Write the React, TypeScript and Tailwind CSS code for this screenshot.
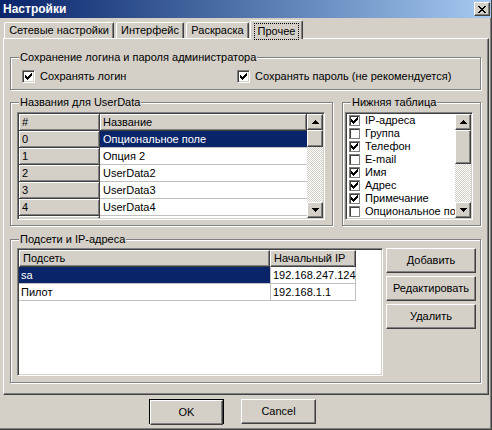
import React from "react";

// classic Win2000 3D edges
const raised =
  "border border-t-white border-l-white border-r-[#404040] border-b-[#404040] shadow-[inset_-1px_-1px_0_#808080]";
const sunken =
  "border border-t-[#808080] border-l-[#808080] border-r-white border-b-white p-px shadow-[inset_1px_1px_0_#404040,inset_-1px_-1px_0_#d4d0c8]";
const dither =
  "bg-[image:repeating-conic-gradient(#fff_0%_25%,#d4d0c8_0%_50%)] bg-[length:2px_2px]";

function Px({ rows }: { rows: [number, number, number][] }) {
  return (
    <>
      {rows.map(([x, y, w], i) => (
        <rect key={i} x={x} y={y} width={w} height={1} />
      ))}
    </>
  );
}

function Tick() {
  return (
    <svg width="7" height="7" viewBox="0 0 7 7" shapeRendering="crispEdges" className="fill-black">
      <Px
        rows={[
          [6, 0, 1],
          [5, 1, 2],
          [0, 2, 1],
          [4, 2, 3],
          [0, 3, 2],
          [3, 3, 3],
          [0, 4, 5],
          [1, 5, 3],
          [2, 6, 1],
        ]}
      />
    </svg>
  );
}

function Arrow({ down }: { down?: boolean }) {
  const rows: [number, number, number][] = [
    [3, 0, 1],
    [2, 1, 3],
    [1, 2, 5],
    [0, 3, 7],
  ];
  return (
    <svg
      width="7"
      height="4"
      viewBox="0 0 7 4"
      shapeRendering="crispEdges"
      className={`fill-black ${down ? "rotate-180" : ""}`}
    >
      <Px rows={rows} />
    </svg>
  );
}

function CloseGlyph() {
  return (
    <svg width="8" height="7" viewBox="0 0 8 7" shapeRendering="crispEdges" className="fill-black">
      <Px
        rows={[
          [0, 0, 2],
          [6, 0, 2],
          [1, 1, 2],
          [5, 1, 2],
          [2, 2, 4],
          [3, 3, 2],
          [2, 4, 4],
          [1, 5, 2],
          [5, 5, 2],
          [0, 6, 2],
          [6, 6, 2],
        ]}
      />
    </svg>
  );
}

function Check({ checked }: { checked?: boolean }) {
  return (
    <div className={`flex h-[13px] w-[13px] shrink-0 items-center justify-center bg-white ${sunken}`}>
      {checked && <Tick />}
    </div>
  );
}

function SmallCheck({ checked }: { checked?: boolean }) {
  return (
    <div className="flex h-[11px] w-[11px] shrink-0 items-center justify-center border border-[#808080] bg-white shadow-[inset_1px_1px_0_#404040]">
      {checked && <Tick />}
    </div>
  );
}

function VScroll({ thumb }: { thumb: string }) {
  return (
    <div className="flex w-[16px] shrink-0 flex-col">
      <div className={`flex h-[16px] shrink-0 items-center justify-center bg-[#d4d0c8] ${raised}`}>
        <Arrow />
      </div>
      <div className={`shrink-0 bg-[#d4d0c8] ${raised} ${thumb}`} />
      <div className={`flex-1 ${dither}`} />
      <div className={`flex h-[16px] shrink-0 items-center justify-center bg-[#d4d0c8] ${raised}`}>
        <Arrow down />
      </div>
    </div>
  );
}

function Group({
  label,
  className,
  children,
}: {
  label: string;
  className: string;
  children: React.ReactNode;
}) {
  return (
    <div
      className={`relative shrink-0 border border-[#808080] shadow-[inset_1px_1px_0_#fff,1px_1px_0_#fff] ${className}`}
    >
      <span className="absolute -top-[7px] left-[8px] bg-[#d4d0c8] px-px leading-[13px] whitespace-nowrap">
        {label}
      </span>
      {children}
    </div>
  );
}

function Btn({ children, className = "" }: { children: React.ReactNode; className?: string }) {
  return (
    <div className={`flex h-[25px] items-center justify-center bg-[#d4d0c8] ${raised} ${className}`}>
      {children}
    </div>
  );
}

function Tab({ children, className }: { children: React.ReactNode; className: string }) {
  return (
    <div
      className={`flex h-[16px] items-center justify-center rounded-t-[2px] border border-b-0 border-t-white border-l-white border-r-[#404040] shadow-[inset_-1px_0_0_#808080] whitespace-nowrap ${className}`}
    >
      {children}
    </div>
  );
}

const fixedCell =
  "border-r border-b border-[#404040] bg-[#d4d0c8] pl-[3px] leading-[16px] shadow-[inset_1px_1px_0_#fff,inset_-1px_-1px_0_#808080]";

const userData = ["Опциональное поле", "Опция 2", "UserData2", "UserData3", "UserData4", ""];

const columns: [string, boolean][] = [
  ["IP-адреса", true],
  ["Группа", false],
  ["Телефон", true],
  ["E-mail", false],
  ["Имя", true],
  ["Адрес", true],
  ["Примечание", true],
  ["Опциональное поле", false],
];

const subnets = [
  { name: "sa", ip: "192.168.247.124", selected: true },
  { name: "Пилот", ip: "192.168.1.1", selected: false },
];

export default function App() {
  return (
    <div className="flex h-[430px] w-[492px] flex-col overflow-hidden border-r border-b border-[#404040] bg-[#d4d0c8] font-['Liberation_Sans',Arial,sans-serif] text-[11px] leading-[13px] text-black shadow-[inset_-1px_-1px_0_#808080]">
      {/* title bar */}
      <div className="flex h-[18px] shrink-0 items-center justify-between bg-linear-to-r from-[#0a246a] to-[#a6caf0] pr-[1px] pl-[3px]">
        <span className="text-[12px] font-bold text-white">Настройки</span>
        <div className={`flex h-[14px] w-[16px] items-center justify-center bg-[#d4d0c8] ${raised}`}>
          <CloseGlyph />
        </div>
      </div>

      {/* tabs */}
      <div className="mt-[2px] flex h-[18px] shrink-0 items-end pl-[4px]">
        <Tab className="w-[110px]">Сетевые настройки</Tab>
        <Tab className="ml-[2px] w-[68px]">Интерфейс</Tab>
        <Tab className="ml-[2px] w-[63px]">Раскраска</Tab>
        <div className="relative z-10 -mb-px ml-[1px] flex h-[19px] w-[53px] items-start justify-center rounded-t-[2px] border border-b-0 border-t-white border-l-white border-r-[#404040] bg-[#d4d0c8] pt-[2px] shadow-[inset_-1px_0_0_#808080]">
          <span className="border border-dotted border-black px-[3px] py-px">Прочее</span>
        </div>
      </div>

      {/* tab page */}
      <div className={`ml-[3px] flex h-[357px] w-[486px] shrink-0 flex-col bg-[#d4d0c8] px-[6px] ${raised}`}>
        <Group label="Сохранение логина и пароля администратора" className="mt-[18px] h-[33px] w-[471px]">
          <div className="flex items-center pt-[12px] pl-[11px]">
            <div className="flex w-[215px] items-center gap-[5px]">
              <Check checked />
              <span>Сохранять логин</span>
            </div>
            <div className="flex items-center gap-[5px]">
              <Check checked />
              <span>Сохранять пароль (не рекомендуется)</span>
            </div>
          </div>
        </Group>

        <div className="mt-[12px] flex gap-[9px]">
          <Group label="Названия для UserData" className="h-[124px] w-[323px]">
            <div className={`mt-[9px] ml-[6px] flex h-[108px] w-[308px] overflow-hidden bg-white ${sunken}`}>
              <div className="flex-1 overflow-hidden">
                <div className="flex h-[17px]">
                  <div className={`w-[81px] ${fixedCell}`}>#</div>
                  <div className={`w-[207px] ${fixedCell}`}>Название</div>
                </div>
                {userData.map((name, i) => (
                  <div key={i} className="flex h-[17px]">
                    <div className={`w-[81px] ${fixedCell}`}>{name === "" ? "" : i}</div>
                    <div
                      className={`w-[207px] border-b border-[#c0c0c0] pl-[3px] leading-[16px] whitespace-nowrap ${
                        i === 0 ? "bg-[#0a246a] text-white" : ""
                      }`}
                    >
                      {name}
                    </div>
                  </div>
                ))}
              </div>
              <VScroll thumb="h-[17px]" />
            </div>
          </Group>

          <Group label="Нижняя таблица" className="h-[124px] w-[139px]">
            <div className={`mt-[9px] ml-[2px] flex h-[108px] w-[128px] overflow-hidden bg-white ${sunken}`}>
              <div className="flex-1 overflow-hidden">
                {columns.map(([label, on]) => (
                  <div key={label} className="flex h-[13px] items-center gap-[5px] pl-[2px] whitespace-nowrap">
                    <SmallCheck checked={on} />
                    <span>{label}</span>
                  </div>
                ))}
              </div>
              <VScroll thumb="h-[34px]" />
            </div>
          </Group>
        </div>

        <Group label="Подсети и IP-адреса" className="mt-[13px] h-[144px] w-[471px]">
          <div className="flex gap-[3px] pt-[8px] pl-[6px]">
            <div className={`h-[128px] w-[366px] overflow-hidden bg-white ${sunken}`}>
              <div className="flex h-[17px]">
                <div className={`w-[251px] bg-[#d4d0c8] pl-[3px] leading-[15px] ${raised}`}>Подсеть</div>
                <div className={`w-[86px] bg-[#d4d0c8] pl-[3px] leading-[15px] ${raised}`}>Начальный IP</div>
              </div>
              {subnets.map((s) => (
                <div key={s.name} className="flex h-[17px]">
                  <div
                    className={`w-[251px] border-b border-[#c0c0c0] pl-[2px] leading-[16px] ${
                      s.selected ? "bg-[#0a246a] text-white" : ""
                    }`}
                  >
                    {s.name}
                  </div>
                  <div className="w-[86px] border-x border-b border-[#c0c0c0] pl-[2px] leading-[16px]">
                    {s.ip}
                  </div>
                </div>
              ))}
            </div>
            <div className="flex w-[90px] flex-col gap-[3px]">
              <Btn>Добавить</Btn>
              <Btn>Редактировать</Btn>
              <Btn>Удалить</Btn>
            </div>
          </div>
        </Group>
      </div>

      {/* dialog buttons */}
      <div className="mt-[4px] flex gap-[17px] pl-[149px]">
        <div className="h-[25px] w-[75px] border border-black">
          <Btn className="h-[23px]">OK</Btn>
        </div>
        <Btn className="w-[75px]">Cancel</Btn>
      </div>
    </div>
  );
}
